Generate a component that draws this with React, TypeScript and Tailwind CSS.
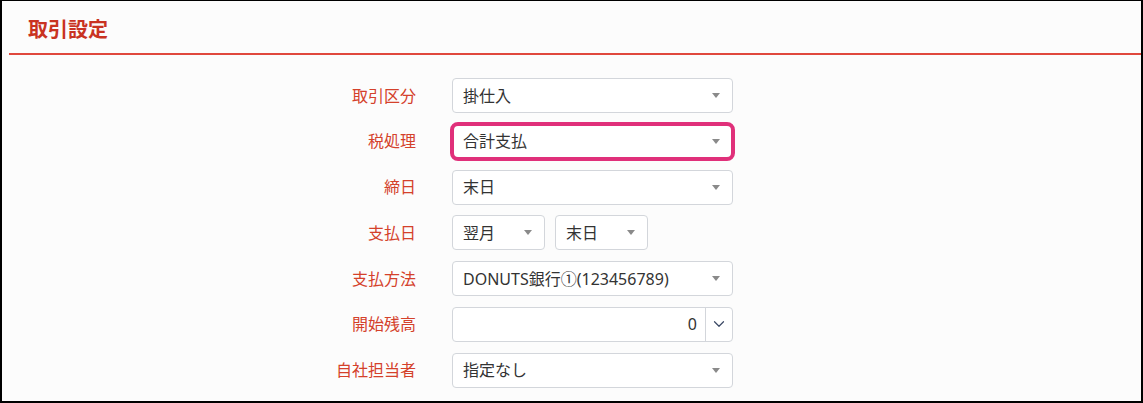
import { ChevronDown } from 'lucide-react';

const font = { fontFamily: '"Noto Sans", "Noto Sans CJK JP", sans-serif' };

function Caret() {
  return (
    <svg width="8" height="5" viewBox="0 0 8 5" className="shrink-0">
      <path d="M0 0 H8 L4 5 Z" fill="#8a8a8a" />
    </svg>
  );
}

function SelectBox({ value, className = '' }: { value: string; className?: string }) {
  return (
    <div
      className={`flex h-[35px] items-center justify-between rounded-[4px] border border-[#d3d6db] bg-white pl-[10px] pr-[12px] text-[16px] text-[#333] ${className}`}
    >
      <span className="truncate">{value}</span>
      <Caret />
    </div>
  );
}

function Row({ label, children }: { label: string; children: React.ReactNode }) {
  return (
    <div className="flex items-center">
      <div className="w-[414px] text-right text-[16px] text-[#d4412b]">{label}</div>
      <div className="ml-[36px] w-[281px]">{children}</div>
    </div>
  );
}

export default function App() {
  return (
    <div
      className="h-[403px] w-[1143px] overflow-hidden border-x-2 border-t border-b-2 border-black bg-[#fcfcfc]"
      style={font}
    >
      <div className="ml-[7px] flex h-[54px] items-center border-b-2 border-[#e0483d] pl-[19px] pt-[6px]">
        <h1 className="text-[20px] font-bold text-[#c93322]">取引設定</h1>
      </div>

      <div className="mt-[23px] flex flex-col gap-[10.8px]">
        <Row label="取引区分">
          <SelectBox value="掛仕入" />
        </Row>
        <Row label="税処理">
          <SelectBox value="合計支払" className="outline-4 -outline-offset-2 outline-[#e0307a] rounded-[6px]" />
        </Row>
        <Row label="締日">
          <SelectBox value="末日" />
        </Row>
        <Row label="支払日">
          <div className="flex gap-[10px]">
            <SelectBox value="翌月" className="w-[93px]" />
            <SelectBox value="末日" className="w-[93px]" />
          </div>
        </Row>
        <Row label="支払方法">
          <SelectBox value="DONUTS銀行①(123456789)" />
        </Row>
        <Row label="開始残高">
          <div className="flex h-[35px] items-stretch overflow-hidden rounded-[4px] border border-[#d3d6db] bg-white text-[16px] text-[#333]">
            <div className="flex flex-1 items-center justify-end pr-[8px]">0</div>
            <div className="flex w-[27px] items-center justify-center border-l border-[#d3d6db]">
              <ChevronDown size={18} strokeWidth={1.6} color="#3c4a66" />
            </div>
          </div>
        </Row>
        <Row label="自社担当者">
          <SelectBox value="指定なし" />
        </Row>
      </div>
    </div>
  );
}
